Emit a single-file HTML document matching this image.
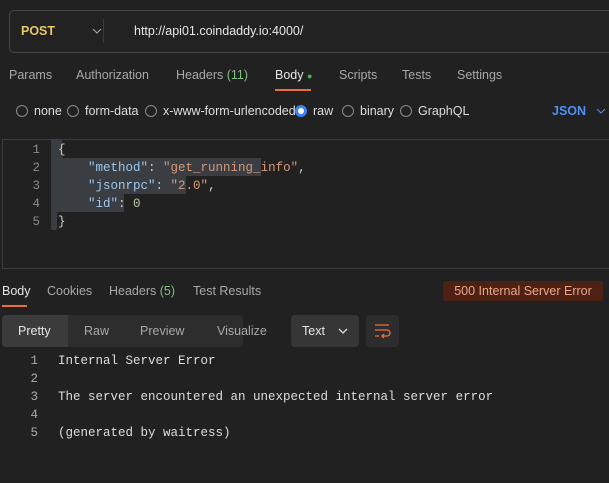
<!DOCTYPE html><html><head><style>
body{margin:0;width:609px;height:483px;background:#212121;font-family:"Liberation Sans",sans-serif;color:#ccc;position:relative;overflow:hidden;font-size:12.5px}
.a{position:absolute;white-space:nowrap}
.m{font-family:"Liberation Mono",monospace;font-size:12.5px}
.rad{display:inline-block;width:10px;height:10px;border:1px solid #8a8a8a;border-radius:50%;vertical-align:-2px;margin-right:6px}
</style></head><body>
<div class="a" style="left:9px;top:10px;width:620px;height:41px;border:1px solid #444;border-radius:5px;background:#222"></div>
<div class="a" style="left:21px;top:24px;color:#e7c86a;font-weight:bold;font-size:12.5px">POST</div>
<svg class="a" style="left:92px;top:27px" width="10" height="8"><path d="M1 2l4 4 4-4" stroke="#aaa" fill="none"/></svg>
<div class="a" style="left:103px;top:19px;width:1px;height:24px;background:#3c3c3c"></div>
<div class="a" style="left:134px;top:24px;color:#e6e6e6">http://api01.coindaddy.io:4000/</div>
<div class="a" style="left:9px;top:68px;color:#a8a8a8">Params</div>
<div class="a" style="left:76px;top:68px;color:#a8a8a8">Authorization</div>
<div class="a" style="left:176px;top:68px;color:#a8a8a8">Headers <span style="color:#7fbf7f">(11)</span></div>
<div class="a" style="left:275px;top:68px;color:#e6e6e6">Body <span style="color:#4caf50;font-size:9px">●</span></div>
<div class="a" style="left:275px;top:89px;width:36px;height:2px;background:#f06f37"></div>
<div class="a" style="left:339px;top:68px;color:#a8a8a8">Scripts</div>
<div class="a" style="left:402px;top:68px;color:#a8a8a8">Tests</div>
<div class="a" style="left:457px;top:68px;color:#a8a8a8">Settings</div>
<div class="a" style="left:16px;top:104px;color:#ddd"><span class="rad"></span>none</div>
<div class="a" style="left:67px;top:104px;color:#ddd"><span class="rad"></span>form-data</div>
<div class="a" style="left:145px;top:104px;color:#ddd"><span class="rad"></span>x-www-form-urlencoded</div>
<div class="a" style="left:295px;top:104px;color:#ddd"><span class="rad" style="border:3px solid #3b82f6;width:6px;height:6px;background:#fff"></span>raw</div>
<div class="a" style="left:342px;top:104px;color:#ddd"><span class="rad"></span>binary</div>
<div class="a" style="left:400px;top:104px;color:#ddd"><span class="rad"></span>GraphQL</div>
<div class="a" style="left:552px;top:104px;color:#4f8ff7;font-weight:bold">JSON</div>
<svg class="a" style="left:596px;top:107px" width="10" height="8"><path d="M1 2l4 4 4-4" stroke="#4f8ff7" fill="none"/></svg>
<div class="a" style="left:2px;top:139px;width:620px;height:128px;border-top:1px solid #3a3a3a;border-bottom:1px solid #3a3a3a;border-left:1px solid #3a3a3a"></div>
<div class="a m" style="left:20px;top:141px;width:20px;text-align:right;line-height:18px;color:#8a8a8a">1<br>2<br>3<br>4<br>5</div>
<div class="a" style="left:51px;top:140px;width:11px;height:18px;background:#3a3d42"></div>
<div class="a" style="left:51px;top:158px;width:210px;height:18px;background:#3a3d42"></div>
<div class="a" style="left:51px;top:176px;width:135px;height:18px;background:#3a3d42"></div>
<div class="a" style="left:51px;top:194px;width:73px;height:18px;background:#3a3d42"></div>
<div class="a" style="left:51px;top:212px;width:6px;height:18px;background:#3a3d42"></div>
<div class="a m" style="left:58px;top:141px;line-height:18px;color:#ccc">{<br>&nbsp;&nbsp;&nbsp;&nbsp;<span style="color:#9cc8ee">"method"</span>: <span style="color:#d69a7a">"get_running_info"</span>,<br>&nbsp;&nbsp;&nbsp;&nbsp;<span style="color:#9cc8ee">"jsonrpc"</span>: <span style="color:#d69a7a">"2.0"</span>,<br>&nbsp;&nbsp;&nbsp;&nbsp;<span style="color:#9cc8ee">"id"</span>: <span style="color:#b5cea8">0</span><br>}</div>
<div class="a" style="left:2px;top:284px;color:#e6e6e6">Body</div>
<div class="a" style="left:2px;top:305px;width:25px;height:2px;background:#f06f37"></div>
<div class="a" style="left:47px;top:284px;color:#a8a8a8">Cookies</div>
<div class="a" style="left:109px;top:284px;color:#a8a8a8">Headers <span style="color:#7fbf7f">(5)</span></div>
<div class="a" style="left:193px;top:284px;color:#a8a8a8">Test Results</div>
<div class="a" style="left:443px;top:281px;width:160px;height:20px;background:#4d2214;border-radius:3px;color:#eea58a;text-align:center;line-height:20px">500 Internal Server Error</div>
<div class="a" style="left:2px;top:315px;width:241px;height:32px;background:#2d2d2d;border-radius:4px"></div>
<div class="a" style="left:2px;top:315px;width:66px;height:32px;background:#3b3b3b;border-radius:4px 0 0 4px"></div>
<div class="a" style="left:18px;top:324px;color:#e6e6e6">Pretty</div>
<div class="a" style="left:84px;top:324px;color:#a8a8a8">Raw</div>
<div class="a" style="left:140px;top:324px;color:#a8a8a8">Preview</div>
<div class="a" style="left:217px;top:324px;color:#a8a8a8">Visualize</div>
<div class="a" style="left:291px;top:315px;width:68px;height:32px;background:#363636;border-radius:4px"></div>
<div class="a" style="left:302px;top:324px;color:#e6e6e6">Text</div>
<svg class="a" style="left:338px;top:327px" width="10" height="8"><path d="M1 2l4 4 4-4" stroke="#ddd" fill="none" stroke-width="1.3"/></svg>
<div class="a" style="left:366px;top:315px;width:33px;height:32px;background:#2d2d2d;border-radius:4px"></div>
<svg class="a" style="left:373px;top:323px" width="20" height="16"><path d="M2 2h14M2 7h12a3 3 0 0 1 0 6h-5M11 11l-2 2 2 2M2 13h4" stroke="#f06f37" fill="none" stroke-width="1.3"/></svg>
<div class="a m" style="left:20px;top:352px;width:18px;text-align:right;line-height:18px;color:#aaa">1<br>2<br>3<br>4<br>5</div>
<div class="a m" style="left:58px;top:352px;line-height:18px;color:#ddd">Internal Server Error<br><br>The server encountered an unexpected internal server error<br><br>(generated by waitress)</div>
</body></html>
